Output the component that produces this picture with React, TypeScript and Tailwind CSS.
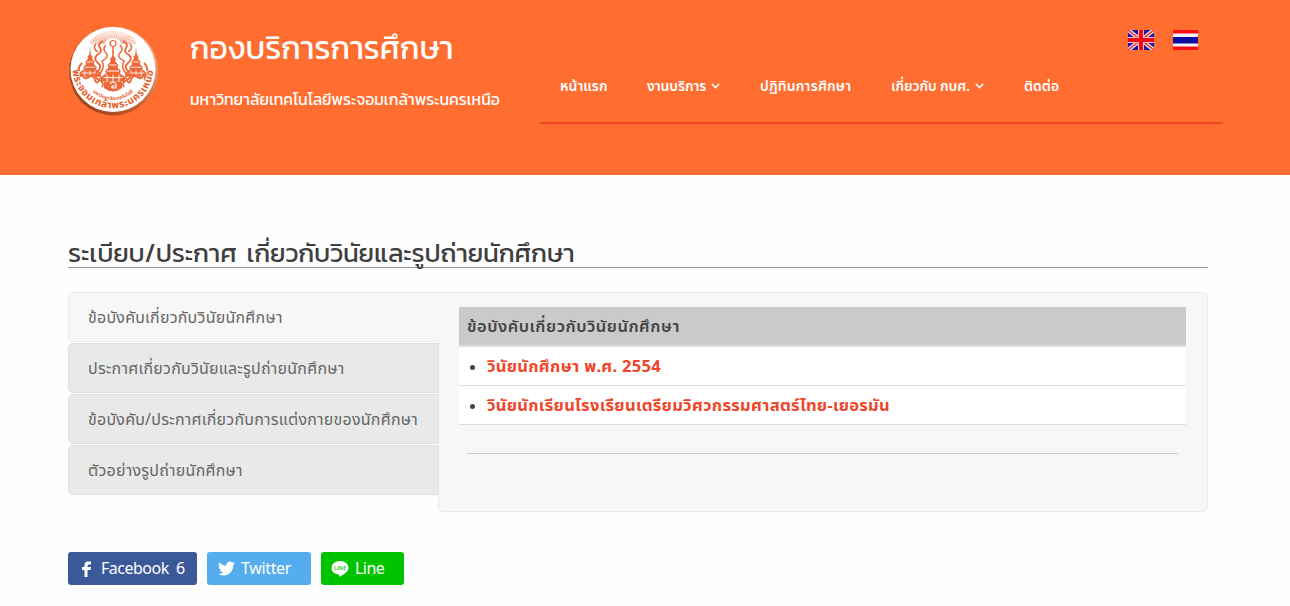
import React from "react";

const sans = "font-['Noto_Sans','Noto_Sans_Thai','Loma',sans-serif]";
const kanit = "font-['Kanit','Prompt','Noto_Sans_Thai','Loma',sans-serif]";

function Temple({ x, y, s }: { x: number; y: number; s: number }) {
  return (
    <g transform={`translate(${x} ${y}) scale(${s})`}>
      <path
        fill="#ed6837"
        d="M0-14l.8 7 1.700 2-.6 2L4.500 0l-.8 2 2.800 3-.8 2L10 10v4h-20v-4l4.300-3-.8-2 2.800-3-.8-2 2.600-3-.6-2 1.700-2z"
      />
      <path d="M-3 0h6M-5 5h10M-8 10.500h16M-5 8v6M0 8v6M5 8v6" stroke="#fff" strokeWidth="0.8" />
    </g>
  );
}

function Crest() {
  const rays = Array.from({ length: 25 }, (_, i) => (Math.PI * (i + 0.5)) / 25);
  return (
    <svg width="92" height="92" viewBox="0 0 92 92" className="shrink-0">
      <defs>
        <linearGradient id="rim" x1="0" y1="1" x2="1" y2="0">
          <stop offset="0" stopColor="#8d3716" />
          <stop offset="0.45" stopColor="#c9602f" />
          <stop offset="1" stopColor="#ffc4a4" />
        </linearGradient>
        <path id="ring" d="M4.700 43 A40.300 40.300 0 0 0 85.300 43" />
        <path id="inner" d="M16 46 A29 29 0 0 0 74 46" />
      </defs>
      <circle cx="45.500" cy="46" r="44.500" fill="url(#rim)" />
      <circle cx="45" cy="44.500" r="42.500" fill="#fff" />
      <g stroke="#f4906a" strokeWidth="0.6">
        {rays.map((a) => (
          <line key={a} x1={45 + 8 * Math.cos(a)} y1={19 - 6 * Math.sin(a)} x2={45 + 23 * Math.cos(a)} y2={19 - 13 * Math.sin(a)} />
        ))}
      </g>
      <circle cx="45" cy="18.500" r="3" fill="none" stroke="#ed6837" strokeWidth="1.200" />
      <path d="M45 21v8" stroke="#ed6837" strokeWidth="1.500" />
      <Temple x={22} y={37} s={1.050} />
      <Temple x={68} y={37} s={1.050} />
      <Temple x={45} y={40} s={1.200} />
      <path d="M36 57h18v6q-9 7-18 0z" fill="#ed6837" />
      <g fill="none" stroke="#ed6837" strokeWidth="1.900">
        <path d="M35 16q-6 3-3 7t-3 7q-4 4 1 8t-1 9q-4 5 2 8t3 7M55 16q6 3 3 7t3 7q4 4-1 8t1 9q4 5-2 8t-3 7" />
        <path d="M38 20q-4 4 0 8t-4 8q3 6-1 11t3 7M52 20q4 4 0 8t4 8q-3 6 1 11t-3 7M28 19q-4 4 2 8M62 19q4 4-2 8" strokeWidth="1.500" />
        <path d="M15 51q2 4 6 1t6 3 5-2M75 51q-2 4-6 1t-6 3-5-2M14 38q-4 4-3 8M76 38q4 4 3 8" />
        <path d="M42 59q3-4 6 0v4h-4v-2h3" stroke="#fff" strokeWidth="1.100" />
      </g>
      <g className={`${sans} font-bold`} fill="#e95a28" textAnchor="middle">
        <text fontSize="10" letterSpacing="0.6"><textPath href="#ring" startOffset="50%">พระจอมเกล้าพระนครเหนือ</textPath></text>
        <text fontSize="4.800"><textPath href="#inner" startOffset="50%">มหาวิทยาลัยเทคโนโลยี</textPath></text>
      </g>
    </svg>
  );
}

function UkFlag() {
  return (
    <svg width="26" height="20" viewBox="0 0 26 20">
      <path fill="#16199b" d="M0 0h26v20H0z" />
      <path d="M0 0l26 20M26 0L0 20" stroke="#f3dfe6" strokeWidth="4" />
      <path d="M0 0l26 20M26 0L0 20" stroke="#ea3640" strokeWidth="1.500" />
      <path d="M13 0v20M0 10h26" stroke="#f8bcc2" strokeWidth="6" />
      <path d="M13 0v20M0 10h26" stroke="#f00c0c" strokeWidth="4" />
    </svg>
  );
}

function ThaiFlag() {
  return (
    <svg width="25" height="20" viewBox="0 0 25 20">
      <path fill="#fb1012" d="M0 0h25v20H0z" />
      <path fill="#f4f0fc" d="M0 3.500h25v13H0z" />
      <path fill="#0c0ca0" d="M0 7h25v6.500H0z" />
    </svg>
  );
}

const nav = [
  { label: "หน้าแรก", w: "w-[47px]", gap: "mr-10" },
  { label: "งานบริการ", w: "w-[59px] tracking-[-0.1px]", gap: "mr-10", menu: true },
  { label: "ปฏิทินการศึกษา", w: "w-[92px] tracking-[0.15px]", gap: "mr-[39px]" },
  { label: "เกี่ยวกับ กบศ.", w: "w-[79px] tracking-[-0.1px]", gap: "mr-10", menu: true },
  { label: "ติดต่อ", w: "w-[35px]", gap: "" },
];

const tabs = [
  "ข้อบังคับเกี่ยวกับวินัยนักศึกษา",
  "ประกาศเกี่ยวกับวินัยและรูปถ่ายนักศึกษา",
  "ข้อบังคับ/ประกาศเกี่ยวกับการแต่งกายของนักศึกษา",
  "ตัวอย่างรูปถ่ายนักศึกษา",
];

export default function App() {
  return (
    <div className={`h-[606px] w-[1290px] overflow-hidden bg-[#fefefe] text-[#444] ${sans}`}>
      <header className="flex h-[175px] bg-[#ff6d30] pl-[68px] text-white">
        <div className="pt-[25px]"><Crest /></div>
        <div className={`ml-[30px] w-[350px] shrink-0 whitespace-nowrap pt-6 ${kanit}`}>
          <h1 className="h-[52px] text-[31.7px] leading-[48px]">กองบริการการศึกษา</h1>
          <p className="text-[15.85px] leading-[48px]">มหาวิทยาลัยเทคโนโลยีพระจอมเกล้าพระนครเหนือ</p>
        </div>
        <div className="w-[683px]">
          <div className="flex h-[64px] justify-end gap-[19px] pr-[25px] pt-[30px]">
            <UkFlag />
            <ThaiFlag />
          </div>
          <nav className="flex h-[60px] items-start border-b-2 border-[#f04524] pl-5 pt-[10px] text-[14px] font-semibold leading-6">
            {nav.map((n) => (
              <a key={n.label} className={`flex items-center whitespace-nowrap ${n.gap}`}>
                <span className={n.w}>{n.label}</span>
                {n.menu && (
                  <svg width="9" height="6" viewBox="0 0 9 6" className="ml-[5px]" fill="none" stroke="white" strokeWidth="1.600">
                    <path d="M.8.8l3.700 3.700L8.200.8" />
                  </svg>
                )}
              </a>
            ))}
          </nav>
        </div>
      </header>

      <main className="ml-[68px] w-[1140px] pt-[57px]">
        <h2 className={`h-[36px] whitespace-nowrap border-b border-[#999] text-[26px] leading-[42px] tracking-[-0.12px] text-[#3f3f3f] [word-spacing:4px] ${kanit}`}>
          ระเบียบ/ประกาศ เกี่ยวกับวินัยและรูปถ่ายนักศึกษา
        </h2>

        <section className="mt-6 flex h-[220px]">
          <div className="relative z-10 flex w-[371px] shrink-0 flex-col gap-px">
            {tabs.map((t, i) => (
              <div
                key={t}
                className={`h-[50px] whitespace-nowrap rounded-l-[5px] border pl-[19px] text-[16px] leading-[49px] tracking-[0.24px] text-[#666] ${
                  i === 0 ? "border-r-0 border-[#ebebeb] bg-[#f7f7f7]" : "border-[#e0e0e0] bg-[#e9e9e9]"
                }`}
              >
                {t}
              </div>
            ))}
          </div>
          <div className="-ml-px w-[770px] rounded-r-[5px] rounded-bl-[5px] border border-[#ebebeb] bg-[#f7f7f7] pl-5 pt-[14px]">
            <div className="w-[727px] whitespace-nowrap text-[16.5px] font-semibold tracking-[0.52px]">
              <div className="h-10 border-b-2 border-[#ddd] bg-[#cacaca] pl-2 leading-[37px]">
                ข้อบังคับเกี่ยวกับวินัยนักศึกษา
              </div>
              {["วินัยนักศึกษา พ.ศ. 2554", "วินัยนักเรียนโรงเรียนเตรียมวิศวกรรมศาสตร์ไทย-เยอรมัน"].map((t) => (
                <div key={t} className="flex h-[39px] items-center border-b border-[#ddd] bg-white pl-[11px] text-[#f04529]">
                  <i className="mr-3 mt-0.5 size-[5px] rounded-full bg-[#444]" />
                  <span className="font-bold tracking-[0.3px]">{t}</span>
                </div>
              ))}
            </div>
            <hr className="ml-2 mt-7 w-[711px] border-[#ccc]" />
          </div>
        </section>

        <div className="mt-10 flex gap-[10px] text-[16px] leading-[33px] text-white">
          <a className="flex h-[33px] w-[129px] items-center rounded-[3px] bg-[#3b5998] pl-[13px]">
            <svg width="11" height="16" viewBox="0 0 11 16" fill="white"><path d="M3.500 16V9H1V6h2.500V4Q3.500.5 7 .5h3v3H8q-1.500 0-1.500 1.500V6H10l-.5 3h-3v7z" /></svg>
            <span className="ml-[9px] h-[33px] w-[75px] tracking-[-0.5px]">Facebook</span><span className="h-[33px]">6</span>
          </a>
          <a className="flex h-[33px] w-[104px] items-center rounded-[3px] bg-[#55acee] pl-[11px]">
            <svg width="17" height="17" viewBox="0 0 24 24" fill="white"><path d="M23.953 4.570a10 10 0 01-2.825.775 4.958 4.958 0 002.163-2.723c-.951.555-2.005.959-3.127 1.184a4.920 4.920 0 00-8.384 4.482C7.690 8.095 4.067 6.130 1.640 3.162a4.822 4.822 0 00-.666 2.475c0 1.710.870 3.213 2.188 4.096a4.904 4.904 0 01-2.228-.616v.060a4.923 4.923 0 003.946 4.827 4.996 4.996 0 01-2.212.085 4.936 4.936 0 004.604 3.417 9.867 9.867 0 01-6.102 2.105c-.390 0-.779-.023-1.170-.067a13.995 13.995 0 007.557 2.209c9.053 0 13.998-7.496 13.998-13.985 0-.210 0-.420-.015-.630A9.935 9.935 0 0024 4.590z" /></svg>
            <span className="ml-[6px] h-[33px] tracking-[-0.35px]">Twitter</span>
          </a>
          <a className="flex h-[33px] w-[83px] items-center rounded-[3px] bg-[#00c300] pl-[10px]">
            <svg width="18" height="16" viewBox="0 0 18 16">
              <path fill="white" d="M9 0C4 0 .5 3 .5 7c0 3.500 3 6 7 6.500 1 .2.600 1.500.5 2.500 3-1.500 9.500-5 9.500-9C17.500 3 14 0 9 0z" />
              <text x="3" y="8.700" fontSize="5" fontWeight="bold" textLength="12" fill="#3bc63b">LINE</text>
            </svg>
            <span className="ml-[6px] h-[33px] tracking-[-0.55px]">Line</span>
          </a>
        </div>
      </main>
    </div>
  );
}
